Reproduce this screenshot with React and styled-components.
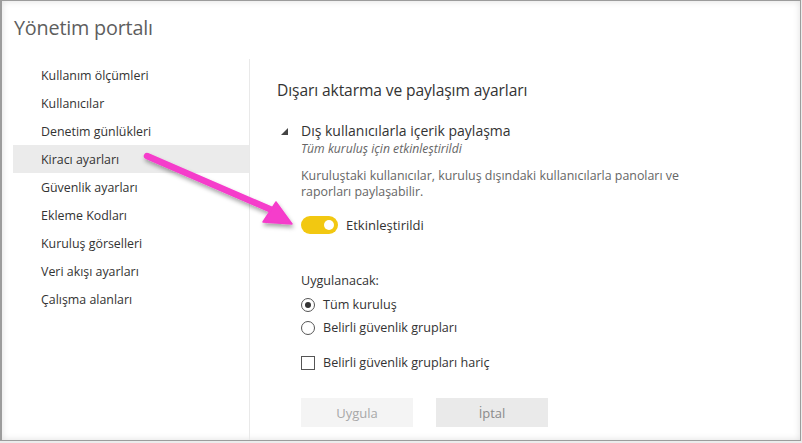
import React from 'react'
import styled, { createGlobalStyle } from 'styled-components'

const Global = createGlobalStyle`
  html, body {
    margin: 0;
    padding: 0;
    background: #ececec;
  }
  body {
    font-family: "Open Sans", "Noto Sans", "DejaVu Sans", sans-serif;
    color: #333;
  }
`

const Frame = styled.div`
  position: relative;
  width: 798px;
  height: 439px;
  border: 1px solid #9c9c9c;
  border-left-width: 2px;
  background: #fff;
  box-shadow: inset 0 0 7px rgba(0, 0, 0, 0.13);
  display: flex;
  flex-direction: column;
  overflow: hidden;
`

const Title = styled.h1`
  margin: 0;
  padding: 13px 0 0 12px;
  height: 44px;
  box-sizing: border-box;
  font-size: 19.8px;
  font-weight: 400;
  color: #5e5e5e;
  letter-spacing: -0.2px;
`

const Body = styled.div`
  display: flex;
  flex: 1;
  padding-top: 14px;
`

const Sidebar = styled.nav`
  width: 236px;
  margin-left: 11px;
  border-right: 1px solid #e9e9e9;
  display: flex;
  flex-direction: column;
  padding-top: 2px;
`

const NavItem = styled.div`
  height: 28px;
  display: flex;
  align-items: center;
  padding-left: 28px;
  font-size: 12.4px;
  color: #333;
  background: ${p => (p.$active ? '#ebebeb' : 'transparent')};
`

const Content = styled.main`
  flex: 1;
  padding: 20px 0 0 27px;
`

const Heading = styled.h2`
  margin: 0 0 20px;
  font-size: 15.6px;
  font-weight: 400;
  color: #333;
  letter-spacing: -0.1px;
`

const SectionHead = styled.div`
  display: flex;
  align-items: center;
  gap: 13px;
  font-size: 14px;
  color: #333;
  margin-left: 4px;
`

const Caret = styled.span`
  width: 0;
  height: 0;
  border-left: 7px solid transparent;
  border-bottom: 7px solid #444;
  margin-top: 1px;
`

const Section = styled.div`
  padding-left: 24px;
`

const Status = styled.div`
  font-size: 12.2px;
  font-style: italic;
  color: #666;
`

const Desc = styled.p`
  margin: 11px 0 0;
  font-size: 12.4px;
  line-height: 16px;
  color: #666;
  width: 420px;
`

const ToggleRow = styled.div`
  display: flex;
  align-items: center;
  gap: 8px;
  margin-top: 16px;
  font-size: 13px;
  color: #333;
`

const Toggle = styled.span`
  width: 37px;
  height: 18px;
  border-radius: 9px;
  background: #f2c811;
  display: flex;
  align-items: center;
  justify-content: flex-end;
  padding-right: 4px;
  box-sizing: border-box;
  &::after {
    content: '';
    width: 10px;
    height: 10px;
    border-radius: 50%;
    background: #fff;
  }
`

const Label = styled.div`
  margin-top: 38px;
  font-size: 12.6px;
  color: #333;
`

const Option = styled.label`
  display: flex;
  align-items: center;
  gap: 8px;
  height: 23px;
  font-size: 12.6px;
  color: #333;
  margin-top: ${p => p.$gap || 0}px;
`

const Radio = styled.span`
  width: 12px;
  height: 12px;
  border: 1px solid #555;
  border-radius: 50%;
  display: flex;
  align-items: center;
  justify-content: center;
  &::after {
    content: '';
    width: 6px;
    height: 6px;
    border-radius: 50%;
    background: ${p => (p.$checked ? '#333' : 'transparent')};
  }
`

const Box = styled.span`
  width: 12px;
  height: 12px;
  border: 1px solid #555;
`

const Buttons = styled.div`
  display: flex;
  gap: 23px;
  margin-top: 24px;
`

const Button = styled.button`
  width: 112px;
  height: 29px;
  border: none;
  font-family: inherit;
  font-size: 13px;
  background: ${p => (p.$primary ? '#f4f4f4' : '#eaeaea')};
  color: ${p => (p.$primary ? '#a8a8a8' : '#8a8a8a')};
`

const Arrow = styled.svg`
  position: absolute;
  left: 0;
  top: 0;
  pointer-events: none;
`

const items = [
  'Kullanım ölçümleri',
  'Kullanıcılar',
  'Denetim günlükleri',
  'Kiracı ayarları',
  'Güvenlik ayarları',
  'Ekleme Kodları',
  'Kuruluş görselleri',
  'Veri akışı ayarları',
  'Çalışma alanları',
]

export default function App() {
  return (
    <>
      <Global />
      <Frame>
        <Title>Yönetim portalı</Title>
        <Body>
          <Sidebar>
            {items.map(item => (
              <NavItem key={item} $active={item === 'Kiracı ayarları'}>
                {item}
              </NavItem>
            ))}
          </Sidebar>
          <Content>
            <Heading>Dışarı aktarma ve paylaşım ayarları</Heading>
            <SectionHead>
              <Caret />
              Dış kullanıcılarla içerik paylaşma
            </SectionHead>
            <Section>
              <Status>Tüm kuruluş için etkinleştirildi</Status>
              <Desc>
                Kuruluştaki kullanıcılar, kuruluş dışındaki kullanıcılarla panoları ve
                raporları paylaşabilir.
              </Desc>
              <ToggleRow>
                <Toggle />
                Etkinleştirildi
              </ToggleRow>
              <Label>Uygulanacak:</Label>
              <Option $gap={4}>
                <Radio $checked />
                Tüm kuruluş
              </Option>
              <Option>
                <Radio />
                Belirli güvenlik grupları
              </Option>
              <Option $gap={12}>
                <Box />
                Belirli güvenlik grupları hariç
              </Option>
              <Buttons>
                <Button $primary>Uygula</Button>
                <Button>İptal</Button>
              </Buttons>
            </Section>
          </Content>
        </Body>
        <Arrow width="800" height="441" viewBox="0 0 800 441">
          <defs>
            <filter id="sh" x="-20%" y="-20%" width="140%" height="140%">
              <feDropShadow dx="1" dy="3" stdDeviation="2" floodColor="#000" floodOpacity="0.35" />
            </filter>
          </defs>
          <g filter="url(#sh)" fill="#f53ccb" stroke="#f53ccb">
            <line x1="145" y1="155" x2="270" y2="209" strokeWidth="6.5" strokeLinecap="round" />
            <polygon points="290,223 261,221 274,201" strokeWidth="1.5" strokeLinejoin="round" />
          </g>
        </Arrow>
      </Frame>
    </>
  )
}
